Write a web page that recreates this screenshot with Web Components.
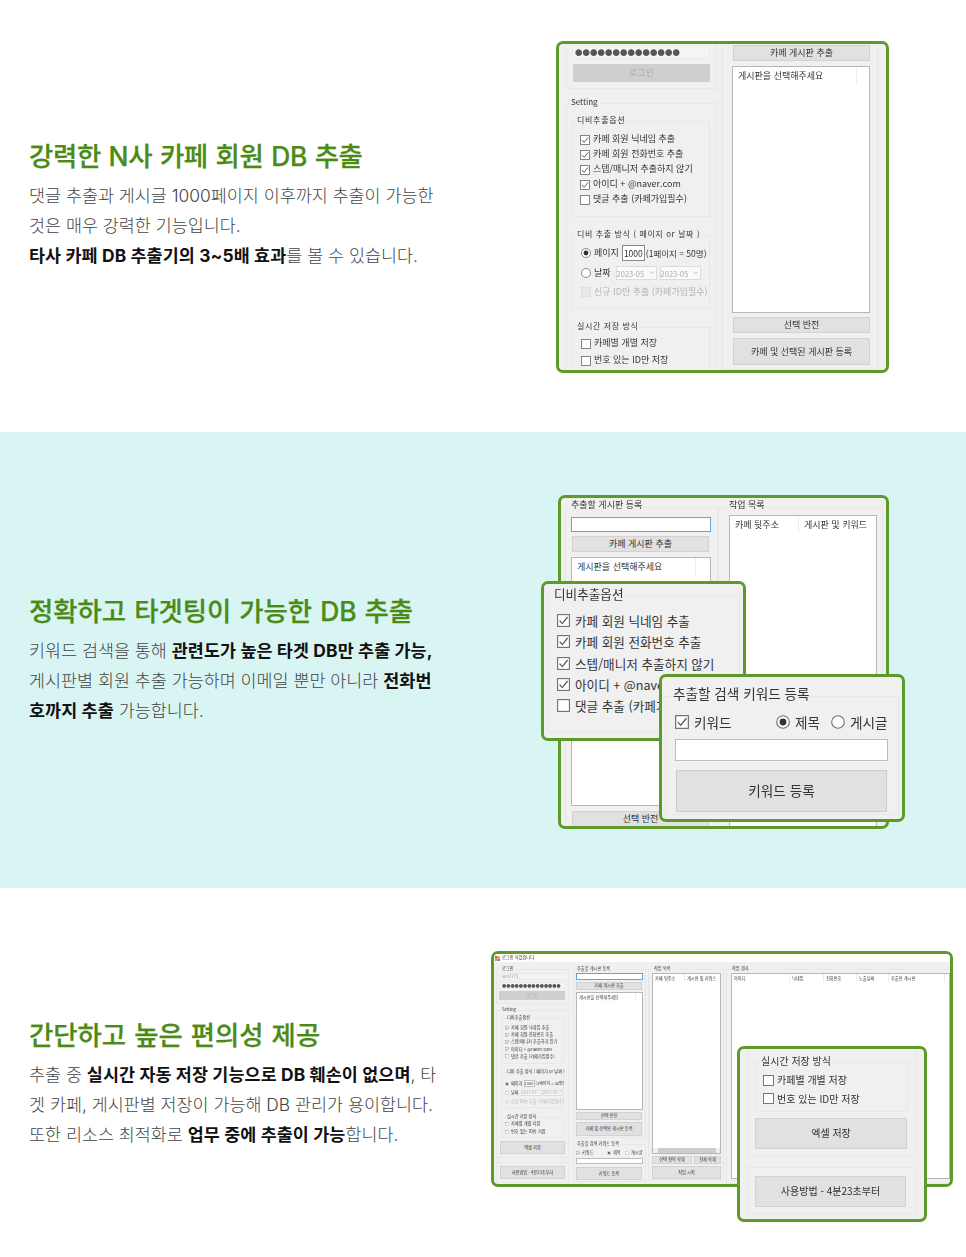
<!DOCTYPE html>
<html lang="ko"><head><meta charset="utf-8"><title>DB 추출</title>
<style>
html,body{margin:0;padding:0;background:#fff}
body{font-family:"Inter","Noto Sans CJK KR","Noto Sans",sans-serif;width:966px;overflow-x:hidden}
</style></head><body>
<script>
const def=(name,css,html,init)=>customElements.define(name,class extends HTMLElement{
  connectedCallback(){ if(this.shadowRoot) return; const r=this.attachShadow({mode:'open'});
    r.innerHTML=`<style>${css}</style>${typeof html==='function'?html(this):html}`; }
});
const WF='"Noto Sans CJK KR","Noto Sans",sans-serif';
def('feature-section',`:host{display:flex;align-items:center;justify-content:space-between;box-sizing:border-box;width:966px;padding-left:29px}
:host([tone=mint]){background:#d9f5f3}`,`<slot></slot>`);
def('feature-copy',`:host{display:block;flex:none;color:#444;font-size:17.4px;line-height:30px;white-space:nowrap;font-weight:300;padding-bottom:7px}
::slotted(b){color:#111;font-weight:700;letter-spacing:.12px}
.t{margin:0 0 2px;line-height:38px}`,`<div class="t"><slot name="title"></slot></div><div><slot></slot></div>`);
def('feature-title',`:host{display:inline;color:#4a8b16;font-size:26.4px;font-weight:500;word-spacing:1px;-webkit-text-stroke:.25px #4a8b16}`,`<slot></slot>`);
def('shot-stage',`:host{display:block;position:relative;flex:none}`,`<slot></slot>`);
def('shot-frame',`:host{display:block;box-sizing:border-box;border:3px solid #5c9a2a;border-radius:7px;background:#f0f0f0;overflow:hidden;
 font-family:${WF};color:#333;line-height:1.2;filter:blur(var(--b,.45px));white-space:nowrap}
:host([float]){position:absolute}`,`<slot></slot>`);
def('win-stack',`:host{display:flex;flex-direction:column;box-sizing:border-box;flex:none}
:host([row]){flex-direction:row;align-items:center}`,`<slot></slot>`);
def('win-group',`:host{display:flex;flex-direction:column;box-sizing:border-box;position:relative;border:1px solid #e7e7e7;flex:none}
.l{position:absolute;left:var(--lx,4px);top:-.85em;background:#f0f0f0;padding:0 1px;color:var(--lc,#333);font-size:var(--lf,1em);line-height:1.2;letter-spacing:var(--ls,0)}`,
 h=>`${h.hasAttribute('label')?`<span class="l">${h.getAttribute('label')}</span>`:''}<slot></slot>`);
def('win-check',`:host{display:flex;align-items:center;height:var(--row,15px);gap:var(--gap,3px);flex:none}
svg{width:var(--box,10px);height:var(--box,10px);flex:none}
:host([disabled]){color:#b4b4b4}`,h=>{const c=h.hasAttribute('checked'),d=h.hasAttribute('disabled');
 return `<svg viewBox="0 0 13 13"><rect x=".6" y=".6" width="11.8" height="11.8" fill="${d?'#e8e8e8':'#fff'}" stroke="${d?'#ddd':'#6f6f6f'}" stroke-width="1.1"/>${c?'<path d="M2.6 6.6 5.3 9.6 10.6 3" fill="none" stroke="#555" stroke-width="1.2"/>':''}</svg><span>${h.getAttribute('label')||''}</span>`});
def('win-radio',`:host{display:flex;align-items:center;height:var(--row,15px);gap:var(--gap,3px);flex:none}
svg{width:var(--box,10px);height:var(--box,10px);flex:none}`,h=>`<svg viewBox="0 0 14 14"><circle cx="7" cy="7" r="6.3" fill="#fff" stroke="#6f6f6f" stroke-width="1.1"/>${h.hasAttribute('checked')?'<circle cx="7" cy="7" r="3.4" fill="#333"/>':''}</svg><span>${h.getAttribute('label')||''}</span>`);
def('win-button',`:host{display:flex;align-items:center;justify-content:center;box-sizing:border-box;background:#e1e1e1;border:1px solid #d2d2d2;color:#333;flex:none;line-height:1;padding-bottom:1px}
:host([disabled]){background:#cfcfcf;border-color:#cfcfcf;color:#adadad}`,`<slot></slot>`);
def('win-input',`:host{display:flex;align-items:center;box-sizing:border-box;background:#fff;border:1px solid #bdbdbd;flex:none;overflow:hidden}
:host([focus]){border-color:#5aa6e2}
:host([soft]){background:#f4f4f4;border-color:#ebebeb}
:host([select]){background:#fafafa;border-color:#dcdcdc;color:#aaa;justify-content:space-between}
svg{width:.7em;height:.7em;flex:none;margin-right:.15em}`,h=>`<slot></slot>${h.hasAttribute('select')?'<svg viewBox="0 0 8 8"><path d="M1 2.5 4 5.5 7 2.5" fill="none" stroke="#999"/></svg>':''}`);
def('win-list',`:host{display:flex;flex-direction:column;box-sizing:border-box;background:#fff;border:1px solid #b7b7b7;flex:none;overflow:hidden}
.h{display:flex;flex:1 1 auto;align-items:flex-start;min-height:0}
.s{display:flex;align-items:center;justify-content:space-between;height:var(--sb,5px);background:#f0f0f0;color:#777;font-size:.7em;flex:none}
.s i{flex:1;height:100%;background:#cdcdcd;margin:0 3px 0 4px}`,h=>`<div class="h"><slot></slot></div>${h.hasAttribute('scroll')?'<div class="s"><span>‹</span><i></i><span>›</span></div>':''}`);
def('win-col',`:host{display:block;box-sizing:border-box;border-right:1px solid #ececec;padding:0 0 0 var(--cp,5px);flex:none;height:var(--ch,17px);line-height:var(--ch,17px);overflow:hidden}`,`<slot></slot>`);
def('title-bar',`:host{display:flex;align-items:center;gap:2px;background:#fff;height:8px;padding-left:1px}
svg{width:5px;height:5px}`,`<svg viewBox="0 0 10 10"><rect width="5" height="5" fill="#d94b3a"/><rect x="5" width="5" height="5" fill="#e8b23c"/><rect y="5" width="5" height="5" fill="#e8913c"/><rect x="5" y="5" width="5" height="5" fill="#5c8fd6"/></svg><slot></slot>`);

const dots='●●●●●●●●●●●●●●';
document.body.insertAdjacentHTML('beforeend',`
<feature-section style="padding-top:41px;padding-bottom:59px;padding-right:77px">
  <feature-copy><feature-title slot="title" style="letter-spacing:-.32px">강력한 N사 카페 회원 DB 추출</feature-title>댓글 추출과 게시글 1000페이지 이후까지 추출이 가능한<br>것은 매우 강력한 기능입니다.<br><b>타사 카페 DB 추출기의 3~5배 효과</b>를 볼 수 있습니다.</feature-copy>
  <shot-stage style="width:333px;height:332px">
    <shot-frame style="width:333px;height:332px;font-size:9px">
      <win-stack row style="align-items:flex-start;height:326px">
        <win-stack style="margin-left:7px;width:151px">
          <win-group style="height:45px;border-top:none;padding:1px 0 0 5px">
            <win-input soft style="width:138px;height:14px;padding-left:2px;font-size:7.4px;color:#555;letter-spacing:.1px">${dots}</win-input>
            <win-button disabled style="width:137px;height:18px;margin:5px 0 0 1px">로그인</win-button>
          </win-group>
          <win-group label="Setting" style="margin-top:14px;height:280px;padding-left:5px;--lx:3px;--lf:8px">
            <win-group label="디비추출옵션" style="margin-top:17px;width:138px;height:96px;padding:10px 0 0 7px;--ls:.7px">
              <win-check checked label="카페 회원 닉네임 추출"></win-check>
              <win-check checked label="카페 회원 전화번호 추출"></win-check>
              <win-check checked label="스텝/매니저 추출하지 않기"></win-check>
              <win-check checked label="아이디 + @naver.com"></win-check>
              <win-check label="댓글 추출 (카페가입필수)"></win-check>
            </win-group>
            <win-group label="디비 추출 방식 ( 페이지 or 날짜 )" style="margin-top:18px;width:138px;height:74px;padding:9px 0 0 8px;--ls:.6px">
              <win-stack row style="height:16px"><win-radio checked label="페이지" style="--row:16px"></win-radio><win-input style="width:23px;height:16px;margin-left:3px;justify-content:center;font-size:8.5px;border-color:#888">1000</win-input><span style="font-size:8.5px;margin-left:1px">(1페이지 = 50명)</span></win-stack>
              <win-stack row style="height:14px;margin-top:5px"><win-radio label="날짜" style="--row:14px"></win-radio><win-input select style="width:41px;height:14px;margin-left:5px;font-size:7.5px">2023-05</win-input><win-input select style="width:41px;height:14px;margin-left:3px;font-size:7.5px">2023-05</win-input></win-stack>
              <win-check disabled label="신규 ID만 추출 (카페가입필수)" style="margin-top:5px;--row:14px"></win-check>
            </win-group>
            <win-group label="실시간 저장 방식" style="margin-top:18px;width:138px;height:60px;padding:7px 0 0 8px;--ls:.6px">
              <win-check label="카페별 개별 저장" style="--row:17px"></win-check>
              <win-check label="번호 있는 ID만 저장" style="--row:17px"></win-check>
            </win-group>
          </win-group>
        </win-stack>
        <win-group style="margin-left:5px;width:156px;height:326px;border-top:none;padding:1px 0 0 9px">
          <win-button style="width:137px;height:16px;margin-left:1px">카페 게시판 추출</win-button>
          <win-list style="width:138px;height:247px;margin-top:5px"><win-col style="width:124px">게시판을 선택해주세요</win-col></win-list>
          <win-button style="width:137px;height:16px;margin:4px 0 0 1px">선택 반전</win-button>
          <win-button style="width:137px;height:27px;margin:5px 0 0 1px">카페 및 선택된 게시판 등록</win-button>
        </win-group>
      </win-stack>
    </shot-frame>
  </shot-stage>
</feature-section>

<feature-section tone="mint" style="padding-top:63px;padding-bottom:59px;padding-right:77px">
  <feature-copy><feature-title slot="title">정확하고 타겟팅이 가능한 DB 추출</feature-title>키워드 검색을 통해 <b>관련도가 높은 타겟 DB만 추출 가능,</b><br>게시판별 회원 추출 가능하며 이메일 뿐만 아니라 <b>전화번</b><br><b>호까지 추출</b> 가능합니다.</feature-copy>
  <shot-stage style="width:331px;height:334px">
    <shot-frame style="width:331px;height:334px;font-size:9px">
      <win-stack row style="align-items:flex-start;height:328px">
        <win-group label="추출할 게시판 등록" style="margin:9px 0 0 4px;width:153px;height:330px;padding:9px 0 0 5px">
          <win-input focus style="width:140px;height:15px"></win-input>
          <win-button style="width:137px;height:16px;margin:4px 0 0 1px">카페 게시판 추출</win-button>
          <win-list style="width:140px;height:249px;margin-top:5px"><win-col style="width:124px">게시판을 선택해주세요</win-col></win-list>
          <win-button style="width:137px;height:16px;margin:5px 0 0 1px">선택 반전</win-button>
        </win-group>
        <win-group label="작업 목록" style="margin-top:9px;width:165px;height:330px;padding:7px 0 0 10px;--lx:9px">
          <win-list style="width:148px;height:330px"><win-col style="width:69px">카페 뒷주소</win-col><win-col style="border:none">게시판 및 키워드</win-col></win-list>
        </win-group>
      </win-stack>
    </shot-frame>
    <shot-frame float style="left:-17px;top:86px;width:205px;height:160px;font-size:12.6px;--row:21.3px;--box:13px;--gap:5px">
      <win-group label="디비추출옵션" style="margin:12px 0 0 3px;width:193px;height:137px;padding:13px 0 0 9px;--lx:5px">
        <win-check checked label="카페 회원 닉네임 추출"></win-check>
        <win-check checked label="카페 회원 전화번호 추출"></win-check>
        <win-check checked label="스텝/매니저 추출하지 않기"></win-check>
        <win-check checked label="아이디 + @naver.com"></win-check>
        <win-check label="댓글 추출 (카페가입필수)"></win-check>
      </win-group>
    </shot-frame>
    <shot-frame float style="left:101px;top:179px;width:246px;height:148px;font-size:13.6px;--row:20px;--box:14px;--gap:5px">
      <win-group label="추출할 검색 키워드 등록" style="margin:19px 0 0 3px;width:234px;height:119px;padding:15px 0 0 9px;--lx:6px">
        <win-stack row style="height:20px">
          <win-check checked label="키워드" style="width:101px"></win-check>
          <win-radio checked label="제목" style="width:55px"></win-radio>
          <win-radio label="게시글"></win-radio>
        </win-stack>
        <win-input style="width:213px;height:22px;margin-top:7px;border-width:1.5px"></win-input>
        <win-button style="width:211px;height:42px;margin:9px 0 0 1px;border:1.5px solid #ccc">키워드 등록</win-button>
      </win-group>
    </shot-frame>
  </shot-stage>
</feature-section>

<feature-section style="padding-top:63px;padding-bottom:35px;padding-right:13px">
  <feature-copy><feature-title slot="title">간단하고 높은 편의성 제공</feature-title>추출 중 <b>실시간 자동 저장 기능으로 DB 훼손이 없으며</b>, 타<br>겟 카페, 게시판별 저장이 가능해 DB 관리가 용이합니다.<br>또한 리소스 최적화로 <b>업무 중에 추출이 가능</b>합니다.</feature-copy>
  <shot-stage style="width:462px;height:271px">
    <shot-frame style="width:462px;height:236px;font-size:4.2px;background:#f0f0f0;--b:.65px;--row:7.2px;--box:4px;--gap:2px">
      <title-bar>로그인 되었습니다</title-bar>
      <win-stack row style="align-items:flex-start">
        <win-stack style="margin-left:2px;width:73px">
          <win-group label="로그인" style="margin-top:7px;height:35px;padding:3px 0 0 2px">
            <win-input soft style="width:67px;height:7px;padding-left:2px;color:#999">sun1771_</win-input>
            <win-input soft style="width:67px;height:7px;margin-top:2px;padding-left:2px;color:#555">${dots}</win-input>
            <win-button disabled style="width:66px;height:9px;margin-top:2px">로그인</win-button>
          </win-group>
          <win-group label="Setting" style="margin-top:6px;height:148px;padding-left:4px">
            <win-group label="디비추출옵션" style="margin-top:7px;width:63px;height:46px;padding:5px 0 0 3px">
              <win-check checked label="카페 회원 닉네임 추출"></win-check>
              <win-check checked label="카페 회원 전화번호 추출"></win-check>
              <win-check checked label="스텝/매니저 추출하지 않기"></win-check>
              <win-check checked label="아이디 + @naver.com"></win-check>
              <win-check label="댓글 추출 (카페가입필수)"></win-check>
            </win-group>
            <win-group label="디비 추출 방식 ( 페이지 or 날짜 )" style="margin-top:8px;width:63px;height:36px;padding:6px 0 0 3px;--row:9px">
              <win-stack row><win-radio checked label="페이지"></win-radio><win-input style="width:11px;height:7px;margin-left:1px;justify-content:center;font-size:4px">1000</win-input><span style="font-size:4px;margin-left:1px">(1페이지 = 50명)</span></win-stack>
              <win-stack row><win-radio label="날짜"></win-radio><win-input select style="width:20px;height:6px;margin-left:2px;font-size:4px">2023-05</win-input><win-input select style="width:20px;height:6px;margin-left:1px;font-size:4px">2023-05</win-input></win-stack>
              <win-check disabled label="신규 ID만 추출 (카페가입필수)"></win-check>
            </win-group>
            <win-group label="실시간 저장 방식" style="margin-top:9px;width:63px;height:21px;padding:2px 0 0 3px;--row:8px">
              <win-check label="카페별 개별 저장"></win-check>
              <win-check label="번호 있는 ID만 저장"></win-check>
            </win-group>
            <win-button style="width:65px;height:13px;margin:3px 0 0 -1px">엑셀 저장</win-button>
          </win-group>
          <win-group style="margin-top:4px;height:21px;padding:3px 0 0 3px"><win-button style="width:65px;height:13px">사용방법 - 4분23초부터</win-button></win-group>
        </win-stack>
        <win-stack style="margin-left:4px;width:73px">
          <win-group label="추출할 게시판 등록" style="margin-top:7px;height:169px;padding:3px 0 0 2px;--lx:2px">
            <win-input focus style="width:67px;height:7px"></win-input>
            <win-button style="width:66px;height:8px;margin-top:2px">카페 게시판 추출</win-button>
            <win-list style="width:67px;height:118px;margin-top:2px;--ch:8px;--cp:2px"><win-col style="width:59px">게시판을 선택해주세요</win-col></win-list>
            <win-button style="width:66px;height:8px;margin-top:2px">선택 반전</win-button>
            <win-button style="width:66px;height:14px;margin-top:2px">카페 및 선택된 게시판 등록</win-button>
          </win-group>
          <win-group label="추출할 검색 키워드 등록" style="margin-top:6px;height:38px;padding:4px 0 0 2px;--lx:2px">
            <win-stack row style="height:8px"><win-check checked label="키워드" style="width:30px"></win-check><win-radio checked label="제목" style="width:18px;margin-left:1px"></win-radio><win-radio label="게시글"></win-radio></win-stack>
            <win-input style="width:67px;height:6px;margin-top:1px"></win-input>
            <win-button style="width:66px;height:13px;margin-top:3px">키워드 등록</win-button>
          </win-group>
        </win-stack>
        <win-group label="작업 목록" style="margin:7px 0 0 2px;width:76px;height:211px;padding:3px 0 0 3px">
          <win-list scroll style="width:69px;height:181px;--ch:8px;--cp:2px"><win-col style="width:32px">카페 뒷주소</win-col><win-col style="border:none">게시판 및 키워드</win-col></win-list>
          <win-stack row style="margin-top:2px;height:8px"><win-button style="width:40px;height:8px">선택 항목 삭제</win-button><win-button style="width:27px;height:8px;margin-left:2px">전체 삭제</win-button></win-stack>
          <win-button style="width:69px;height:13px;margin-top:2px">작업 시작</win-button>
        </win-group>
        <win-group label="작업 결과" style="margin:7px 0 0 2px;width:224px;height:215px;padding:3px 0 0 4px;border-right:none">
          <win-list style="width:219px;height:206px;--ch:8px;--cp:2px"><win-col style="width:58px">아이디</win-col><win-col style="width:34px">닉네임</win-col><win-col style="width:33px">전화번호</win-col><win-col style="width:32px">노출날짜</win-col><win-col style="width:56px">추출된 게시판</win-col></win-list>
        </win-group>
      </win-stack>
    </shot-frame>
    <shot-frame float style="left:246px;top:95px;width:190px;height:176px;font-size:10px;--row:18.5px;--box:11px;--gap:3px">
      <win-group style="margin-left:7px;width:169px;height:107px;border-top:none;padding:13px 0 0 7px">
        <win-group label="실시간 저장 방식" style="width:153px;height:50px;padding:8px 0 0 7px;--lx:4px">
          <win-check label="카페별 개별 저장"></win-check>
          <win-check label="번호 있는 ID만 저장"></win-check>
        </win-group>
        <win-button style="width:152px;height:31px;margin-top:6px">엑셀 저장</win-button>
      </win-group>
      <win-group style="margin:11px 0 0 7px;width:169px;height:47px;padding:8px 0 0 7px">
        <win-button style="width:151px;height:31px">사용방법 - 4분23초부터</win-button>
      </win-group>
    </shot-frame>
  </shot-stage>
</feature-section>`);
</script>
</body></html>
